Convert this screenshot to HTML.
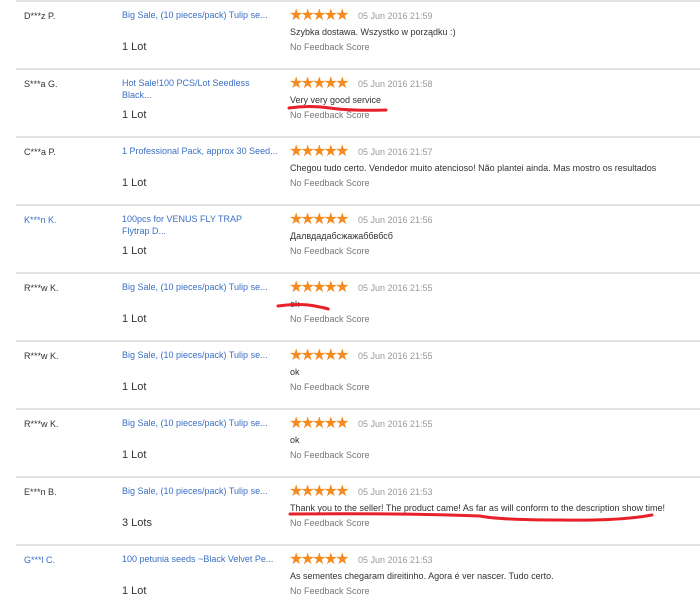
<!DOCTYPE html>
<html><head><meta charset="utf-8"><style>
body{margin:0;width:700px;height:601px;background:#fff;font-family:"Liberation Sans",Arial,sans-serif;position:relative;overflow:hidden}
.row{position:absolute;left:0;width:700px;height:68px}
.sep{position:absolute;left:16px;right:0;top:0;height:2px;background:#e3e3e3}
.n{position:absolute;left:24px;top:11px;font-size:9px;color:#333}
.n.b{color:#3a6fc4}
.p{position:absolute;left:122px;top:9px;width:148px;font-size:9px;line-height:12px;color:#3a6fc4}
.p.o{white-space:nowrap}
.l{position:absolute;left:122px;top:41px;font-size:11px;color:#333}
.s{position:absolute;left:289px;top:8px;font-size:16px;letter-spacing:-2.8px;color:#f58a1f;line-height:16px}
.d{position:absolute;left:358px;top:11px;font-size:9px;color:#999}
.c{position:absolute;left:290px;top:27px;font-size:9px;color:#333;white-space:nowrap}
.f{position:absolute;left:290px;top:42px;font-size:9px;color:#777}
</style></head><body>
<div class="row" style="top:0"><div class="sep"></div><div class="n">D***z P.</div><div class="p o">Big Sale, (10 pieces/pack) Tulip se...</div><div class="l">1 Lot</div><div class="s">★★★★★</div><div class="d">05 Jun 2016 21:59</div><div class="c">Szybka dostawa. Wszystko w porządku :)</div><div class="f">No Feedback Score</div></div>
<div class="row" style="top:68px"><div class="sep"></div><div class="n">S***a G.</div><div class="p" style="width:132px">Hot Sale!100 PCS/Lot Seedless Black...</div><div class="l">1 Lot</div><div class="s">★★★★★</div><div class="d">05 Jun 2016 21:58</div><div class="c">Very very good service</div><div class="f">No Feedback Score</div></div>
<div class="row" style="top:136px"><div class="sep"></div><div class="n">C***a P.</div><div class="p o">1 Professional Pack, approx 30 Seed...</div><div class="l">1 Lot</div><div class="s">★★★★★</div><div class="d">05 Jun 2016 21:57</div><div class="c">Chegou tudo certo. Vendedor muito atencioso! Não plantei ainda. Mas mostro os resultados</div><div class="f">No Feedback Score</div></div>
<div class="row" style="top:204px"><div class="sep"></div><div class="n b">K***n K.</div><div class="p" style="width:135px">100pcs for VENUS FLY TRAP Flytrap D...</div><div class="l">1 Lot</div><div class="s">★★★★★</div><div class="d">05 Jun 2016 21:56</div><div class="c">Далвдадабсжажаббвбсб</div><div class="f">No Feedback Score</div></div>
<div class="row" style="top:272px"><div class="sep"></div><div class="n">R***w K.</div><div class="p o">Big Sale, (10 pieces/pack) Tulip se...</div><div class="l">1 Lot</div><div class="s">★★★★★</div><div class="d">05 Jun 2016 21:55</div><div class="c">ok</div><div class="f">No Feedback Score</div></div>
<div class="row" style="top:340px"><div class="sep"></div><div class="n">R***w K.</div><div class="p o">Big Sale, (10 pieces/pack) Tulip se...</div><div class="l">1 Lot</div><div class="s">★★★★★</div><div class="d">05 Jun 2016 21:55</div><div class="c">ok</div><div class="f">No Feedback Score</div></div>
<div class="row" style="top:408px"><div class="sep"></div><div class="n">R***w K.</div><div class="p o">Big Sale, (10 pieces/pack) Tulip se...</div><div class="l">1 Lot</div><div class="s">★★★★★</div><div class="d">05 Jun 2016 21:55</div><div class="c">ok</div><div class="f">No Feedback Score</div></div>
<div class="row" style="top:476px"><div class="sep"></div><div class="n">E***n B.</div><div class="p o">Big Sale, (10 pieces/pack) Tulip se...</div><div class="l">3 Lots</div><div class="s">★★★★★</div><div class="d">05 Jun 2016 21:53</div><div class="c">Thank you to the seller! The product came! As far as will conform to the description show time!</div><div class="f">No Feedback Score</div></div>
<div class="row" style="top:544px"><div class="sep"></div><div class="n b">G***l C.</div><div class="p o">100 petunia seeds ~Black Velvet Pe...</div><div class="l">1 Lot</div><div class="s">★★★★★</div><div class="d">05 Jun 2016 21:53</div><div class="c">As sementes chegaram direitinho. Agora é ver nascer. Tudo certo.</div><div class="f">No Feedback Score</div></div>
<svg width="700" height="601" style="position:absolute;left:0;top:0" fill="none" stroke="#e8202a" stroke-linecap="round" stroke-width="3">
<path d="M289 108 Q310 105 330 108 T386 110"/>
<path d="M278 306 Q300 303 315 306 T328 309"/>
<path d="M290 514 Q400 513 480 516 Q500 520 560 520 Q620 521 652 515"/>
</svg>
</body></html>
